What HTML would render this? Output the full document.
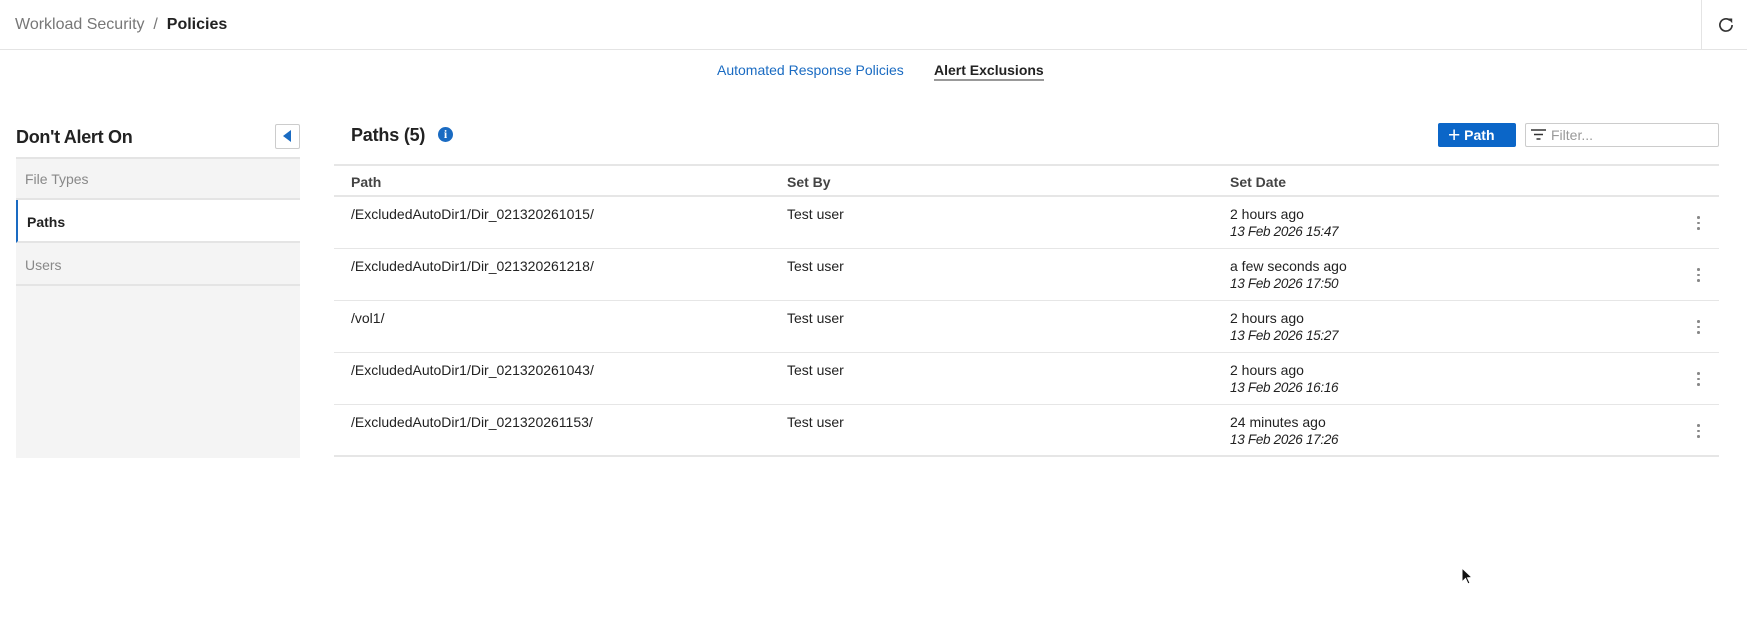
<!DOCTYPE html>
<html><head><meta charset="utf-8"><style>
*{margin:0;padding:0;box-sizing:border-box}
body{width:1747px;height:625px;background:#fff;font-family:"Liberation Sans",sans-serif;color:#222;position:relative;overflow:hidden}
.a{position:absolute;white-space:nowrap}
.hdr{position:absolute;left:0;top:0;width:1747px;height:50px;border-bottom:1px solid #e4e4e4}
.row{position:absolute;left:334px;width:1385px;border-bottom:1px solid #e6e6e6}
.c{position:absolute;font-size:14px;color:#222;white-space:nowrap}
.i{font-style:italic;font-size:13.5px;letter-spacing:-0.3px}
.k{position:absolute;width:3px}
.k i{display:block;width:2.5px;height:2.5px;background:#888;border-radius:50%;margin-bottom:3px}
</style></head><body>
<div class="hdr"></div>
<div class="a" style="left:15px;top:16px;font-size:16px;color:#777">Workload Security &nbsp;/&nbsp; <b style="color:#222">Policies</b></div>
<div class="a" style="left:1701px;top:0;width:1px;height:50px;background:#e4e4e4"></div>
<svg class="a" style="left:1716px;top:15px" width="20" height="20" viewBox="0 0 18 18"><path d="M14.5 9A5.5 5.5 0 1 1 12.6 4.8" fill="none" stroke="#333" stroke-width="1.5"/><path d="M10.5 3.2L14.6 3.2 14.6 7.3Z" fill="#333"/></svg>
<div class="a" style="left:717px;top:62px;font-size:14px;color:#1a6bc2">Automated Response Policies</div>
<div class="a" style="left:934px;top:62px;font-size:14px;color:#222;font-weight:bold;padding-bottom:1px;border-bottom:2px solid #999">Alert Exclusions</div>

<div class="a" style="left:16px;top:158px;width:284px;height:300px;background:#f4f4f4"></div>
<div class="a" style="left:16px;top:127px;font-size:18px;font-weight:bold;letter-spacing:-0.3px">Don't Alert On</div>
<div class="a" style="left:275px;top:124px;width:25px;height:25px;border:1px solid #ccc;background:#fff;border-radius:2px"></div>
<div class="a" style="left:283px;top:130px;width:0;height:0;border-top:6.5px solid transparent;border-bottom:6.5px solid transparent;border-right:8px solid #1a6bc2"></div>
<div class="a" style="left:16px;top:157px;width:284px;height:43px;border-bottom:2px solid #e4e4e4;border-top:2px solid #e4e4e4"></div>
<div class="a" style="left:25px;top:171px;font-size:14px;color:#888">File Types</div>
<div class="a" style="left:16px;top:200px;width:284px;height:43px;background:#fff;border-left:2px solid #1a6bc2;border-bottom:2px solid #e4e4e4"></div>
<div class="a" style="left:27px;top:214px;font-size:14px;font-weight:bold">Paths</div>
<div class="a" style="left:16px;top:243px;width:284px;height:43px;border-bottom:2px solid #e4e4e4"></div>
<div class="a" style="left:25px;top:257px;font-size:14px;color:#888">Users</div>

<div class="a" style="left:351px;top:125px;font-size:18px;font-weight:bold;letter-spacing:-0.2px">Paths (5)</div>
<div class="a" style="left:438px;top:127px;width:15px;height:15px;border-radius:50%;background:#1a6bc2;color:#fff;font-size:12px;font-weight:bold;text-align:center;line-height:15px;font-family:'Liberation Serif',serif">i</div>
<div class="a" style="left:1438px;top:123px;width:78px;height:24px;background:#0b66c8;border-radius:2px;color:#fff;font-size:14px;font-weight:bold;line-height:24px;padding-left:10px"><span style="font-size:21px;font-weight:normal;vertical-align:-2px">+</span> Path</div>
<div class="a" style="left:1525px;top:123px;width:194px;height:24px;border:1px solid #ccc;border-radius:2px"></div>
<svg class="a" style="left:1530px;top:128px" width="18" height="14"><path d="M1 2h15M4 6.5h9M6.5 11h4" stroke="#333" stroke-width="1.6"/></svg>
<div class="a" style="left:1551px;top:127px;font-size:14px;color:#999">Filter...</div>

<div class="row" style="top:164px;height:33px;border-top:2px solid #e6e6e6;border-bottom:2px solid #e6e6e6"></div>
<div class="c" style="left:351px;top:174px;color:#444;font-weight:bold">Path</div>
<div class="c" style="left:787px;top:174px;color:#444;font-weight:bold">Set By</div>
<div class="c" style="left:1230px;top:174px;color:#444;font-weight:bold">Set Date</div>

<div class="row" style="top:197px;height:52px"></div>
<div class="c" style="left:351px;top:206px">/ExcludedAutoDir1/Dir_021320261015/</div>
<div class="c" style="left:787px;top:206px">Test user</div>
<div class="c" style="left:1230px;top:206px">2 hours ago</div>
<div class="c i" style="left:1230px;top:224px">13 Feb 2026 15:47</div>
<div class="k" style="left:1697px;top:216px"><i></i><i></i><i></i></div>

<div class="row" style="top:249px;height:52px"></div>
<div class="c" style="left:351px;top:258px">/ExcludedAutoDir1/Dir_021320261218/</div>
<div class="c" style="left:787px;top:258px">Test user</div>
<div class="c" style="left:1230px;top:258px">a few seconds ago</div>
<div class="c i" style="left:1230px;top:276px">13 Feb 2026 17:50</div>
<div class="k" style="left:1697px;top:268px"><i></i><i></i><i></i></div>

<div class="row" style="top:301px;height:52px"></div>
<div class="c" style="left:351px;top:310px">/vol1/</div>
<div class="c" style="left:787px;top:310px">Test user</div>
<div class="c" style="left:1230px;top:310px">2 hours ago</div>
<div class="c i" style="left:1230px;top:328px">13 Feb 2026 15:27</div>
<div class="k" style="left:1697px;top:320px"><i></i><i></i><i></i></div>

<div class="row" style="top:353px;height:52px"></div>
<div class="c" style="left:351px;top:362px">/ExcludedAutoDir1/Dir_021320261043/</div>
<div class="c" style="left:787px;top:362px">Test user</div>
<div class="c" style="left:1230px;top:362px">2 hours ago</div>
<div class="c i" style="left:1230px;top:380px">13 Feb 2026 16:16</div>
<div class="k" style="left:1697px;top:372px"><i></i><i></i><i></i></div>

<div class="row" style="top:405px;height:52px;border-bottom:2px solid #e6e6e6"></div>
<div class="c" style="left:351px;top:414px">/ExcludedAutoDir1/Dir_021320261153/</div>
<div class="c" style="left:787px;top:414px">Test user</div>
<div class="c" style="left:1230px;top:414px">24 minutes ago</div>
<div class="c i" style="left:1230px;top:432px">13 Feb 2026 17:26</div>
<div class="k" style="left:1697px;top:424px"><i></i><i></i><i></i></div>

<svg class="a" style="left:1461px;top:567px" width="14" height="20"><path d="M1 1L1 15 4.5 11.5 7 17 9 16 6.5 10.8 11 10.5Z" fill="#111" stroke="#fff" stroke-width="1"/></svg>
</body></html>
